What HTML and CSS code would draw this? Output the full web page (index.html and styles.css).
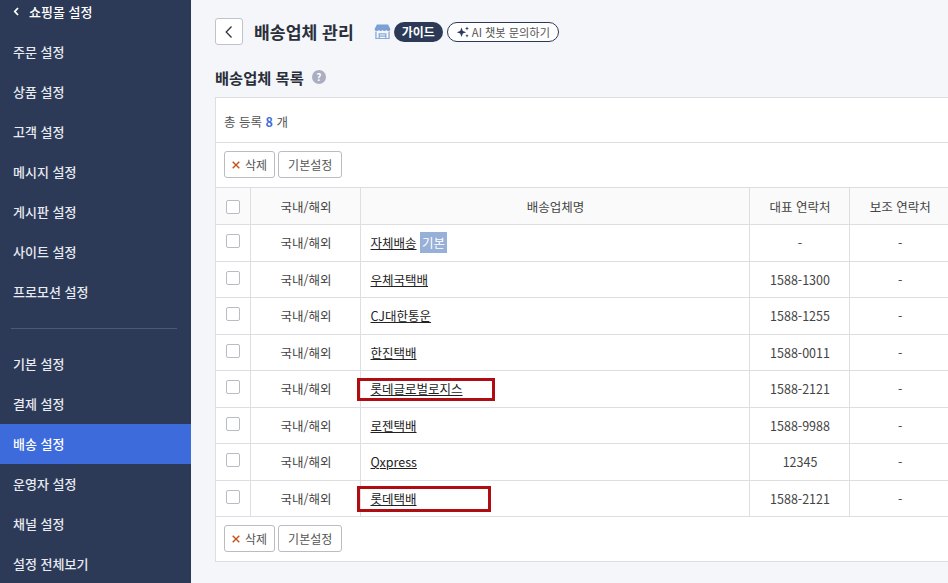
FILE: index.html
```html
<!DOCTYPE html>
<html lang="ko">
<head>
    <meta charset="UTF-8">
    <title>배송업체 관리</title>
    <link rel="stylesheet" href="styles.css">
</head>
<body>
    <!-- Sidebar -->
    <aside class="sidebar">
        <div class="side-item side-back">
            <svg class="back-icon" width="7" height="9" viewBox="0 0 7 9"><path d="M5 1 L1.8 4.5 L5 8" fill="none" stroke="#fff" stroke-width="1.8"/></svg>
            쇼핑몰 설정
        </div>
        <div class="side-item">주문 설정</div>
        <div class="side-item">상품 설정</div>
        <div class="side-item">고객 설정</div>
        <div class="side-item">메시지 설정</div>
        <div class="side-item">게시판 설정</div>
        <div class="side-item">사이트 설정</div>
        <div class="side-item">프로모션 설정</div>
        <div class="side-divider"></div>
        <div class="side-item">기본 설정</div>
        <div class="side-item">결제 설정</div>
        <div class="side-item active">배송 설정</div>
        <div class="side-item">운영자 설정</div>
        <div class="side-item">채널 설정</div>
        <div class="side-item">설정 전체보기</div>
    </aside>

    <main class="content">
        <!-- Page title -->
        <div class="page-head">
            <button class="back-btn">
                <svg width="10" height="14" viewBox="0 0 10 14"><path d="M7.5 1.5 L2.2 7 L7.5 12.5" fill="none" stroke="#333" stroke-width="1.3"/></svg>
            </button>
            <h1>배송업체 관리</h1>
            <svg class="store-icon" width="17" height="15" viewBox="0 0 18 16">
                <path d="M3 0.5 H15 L17.5 5.5 Q17 7.5 15 7.5 Q13.5 7.5 13 6.5 Q12 7.5 11 7.5 Q9.8 7.5 9 6.5 Q8.2 7.5 7 7.5 Q6 7.5 5 6.5 Q4.5 7.5 3 7.5 Q1 7.5 0.5 5.5 Z" fill="#7ba0d6"/>
                <path d="M2 8 V15.5 H16 V8 M5.5 15.5 V10.5 H12.5 V15.5 M5.5 13 H12.5" fill="none" stroke="#8aabd9" stroke-width="1.4"/>
            </svg>
            <span class="guide-pill">가이드</span>
            <span class="ai-pill">
                <svg width="14" height="12" viewBox="0 0 14 12">
                    <path d="M5.5 1.5 L6.8 5 L10.2 6.2 L6.8 7.5 L5.5 11 L4.2 7.5 L0.8 6.2 L4.2 5 Z" fill="#2b3a58"/>
                    <path d="M11 0.5 L11.6 2 L13 2.5 L11.6 3 L11 4.5 L10.4 3 L9 2.5 L10.4 2 Z" fill="#2b3a58"/>
                    <path d="M11 8 L11.5 9.2 L12.7 9.7 L11.5 10.2 L11 11.4 L10.5 10.2 L9.3 9.7 L10.5 9.2 Z" fill="#2b3a58"/>
                </svg>
                AI 챗봇 문의하기
            </span>
        </div>

        <div class="section-head">
            <h2>배송업체 목록</h2>
            <span class="help-icon">?</span>
        </div>

        <!-- Carrier list -->
        <section class="panel">
            <div class="panel-count">총 등록 <b>8</b> 개</div>
            <div class="panel-tools">
                <button class="btn btn-del">
                    <svg width="8" height="8" viewBox="0 0 8 8"><path d="M0.7 0.7 L7.3 7.3 M7.3 0.7 L0.7 7.3" stroke="#c8501c" stroke-width="1.4"/></svg>
                    삭제
                </button>
                <button class="btn">기본설정</button>
            </div>
            <table class="carrier-table">
                <colgroup>
                    <col class="col-check"><col class="col-region"><col class="col-name"><col class="col-phone"><col class="col-phone">
                </colgroup>
                <thead>
                    <tr>
                        <th><span class="check"></span></th>
                        <th>국내/해외</th>
                        <th>배송업체명</th>
                        <th>대표 연락처</th>
                        <th>보조 연락처</th>
                    </tr>
                </thead>
                <tbody>
                    <tr>
                        <td><span class="check"></span></td><td>국내/해외</td>
                        <td class="name"><a>자체배송</a> <span class="default-tag">기본</span></td>
                        <td>-</td><td>-</td>
                    </tr>
                    <tr>
                        <td><span class="check"></span></td><td>국내/해외</td>
                        <td class="name"><a>우체국택배</a></td>
                        <td>1588-1300</td><td>-</td>
                    </tr>
                    <tr>
                        <td><span class="check"></span></td><td>국내/해외</td>
                        <td class="name"><a>CJ대한통운</a></td>
                        <td>1588-1255</td><td>-</td>
                    </tr>
                    <tr>
                        <td><span class="check"></span></td><td>국내/해외</td>
                        <td class="name"><a>한진택배</a></td>
                        <td>1588-0011</td><td>-</td>
                    </tr>
                    <tr>
                        <td><span class="check"></span></td><td>국내/해외</td>
                        <td class="name"><a>롯데글로벌로지스</a><span class="mark mark-a"></span></td>
                        <td>1588-2121</td><td>-</td>
                    </tr>
                    <tr>
                        <td><span class="check"></span></td><td>국내/해외</td>
                        <td class="name"><a>로젠택배</a></td>
                        <td>1588-9988</td><td>-</td>
                    </tr>
                    <tr>
                        <td><span class="check"></span></td><td>국내/해외</td>
                        <td class="name"><a>Qxpress</a></td>
                        <td>12345</td><td>-</td>
                    </tr>
                    <tr>
                        <td><span class="check"></span></td><td>국내/해외</td>
                        <td class="name"><a>롯데택배</a><span class="mark mark-b"></span></td>
                        <td>1588-2121</td><td>-</td>
                    </tr>
                </tbody>
            </table>
            <div class="panel-tools panel-tools-bottom">
                <button class="btn btn-del">
                    <svg width="8" height="8" viewBox="0 0 8 8"><path d="M0.7 0.7 L7.3 7.3 M7.3 0.7 L0.7 7.3" stroke="#c8501c" stroke-width="1.4"/></svg>
                    삭제
                </button>
                <button class="btn">기본설정</button>
            </div>
        </section>
    </main>
</body>
</html>
```

FILE: styles.css
```css
/* General Reset */
* {
    margin: 0;
    padding: 0;
    box-sizing: border-box;
}

html, body {
    height: 583px;
    overflow: hidden;
}

body {
    display: flex;
    font-family: "Noto Sans CJK KR", "Noto Sans", sans-serif;
    background-color: #f4f6fa;
    color: #333;
}

/* Sidebar */
.sidebar {
    flex: 0 0 191px;
    height: 591px;
    margin-top: -8px;
    overflow: hidden;
    background-color: #2c3a58;
}

.side-item {
    display: flex;
    align-items: center;
    height: 40px;
    padding: 0 0 2px 13px;
    font-size: 13px;
    font-weight: 500;
    color: #e8ebf1;
}

.side-back {
    color: #fff;
}

.back-icon {
    margin-right: 9px;
}

.side-item.active {
    background-color: #3d6bdc;
    color: #fff;
}

.side-divider {
    height: 1px;
    margin: 16px 14px 15px 11px;
    background-color: #4d5a75;
}

/* Page title */
.content {
    flex: 1;
    min-width: 0;
    padding: 18px 0 0 24px;
}

.page-head {
    display: flex;
    align-items: center;
    height: 27px;
}

.back-btn {
    display: flex;
    align-items: center;
    justify-content: center;
    width: 28px;
    height: 27px;
    background-color: #fff;
    border: 1px solid #bfc3ca;
    border-radius: 3px;
}

.page-head h1 {
    margin: 0 20px 0 11px;
    font-size: 17.2px;
    font-weight: 700;
    color: #2a2f3a;
}

.store-icon {
    margin-right: 3px;
}

.guide-pill {
    height: 20px;
    padding: 0 8px;
    margin-right: 4px;
    border-radius: 10px;
    background-color: #2c3a58;
    color: #fff;
    font-size: 12px;
    font-weight: 700;
    line-height: 19px;
}

.ai-pill {
    display: flex;
    align-items: center;
    gap: 2px;
    height: 20px;
    padding: 0 8px;
    border: 1px solid #2c3a58;
    border-radius: 10px;
    background-color: #fff;
    color: #555;
    font-size: 11.2px;
}

.section-head {
    display: flex;
    align-items: center;
    gap: 8px;
    margin-top: 20px;
    height: 24px;
}

.section-head h2 {
    font-size: 15.3px;
    font-weight: 700;
    color: #2a2f3a;
}

.help-icon {
    width: 14px;
    height: 14px;
    border-radius: 50%;
    background-color: #a9afc0;
    color: #fff;
    font-size: 10px;
    font-weight: 700;
    line-height: 14px;
    text-align: center;
}

/* Panel */
.panel {
    margin-top: 8px;
    background-color: #fff;
    border: 1px solid #dcdee2;
    border-right: none;
}

.panel-count {
    height: 45px;
    padding-left: 8px;
    border-bottom: 1px solid #dcdee2;
    font-size: 12.5px;
    line-height: 47px;
    color: #555;
}

.panel-count b {
    font-weight: 700;
    color: #3d6bdc;
}

.panel-tools {
    display: flex;
    gap: 3px;
    height: 44px;
    padding: 8px 0 0 8px;
}

.btn {
    display: flex;
    align-items: center;
    justify-content: center;
    height: 27px;
    padding: 0 9px;
    background-color: #fff;
    border: 1px solid #b9bcc3;
    border-radius: 3px;
    font-family: inherit;
    font-size: 12px;
    color: #555;
}

.btn-del {
    gap: 5px;
    padding: 0 7px;
}

/* Table */
.carrier-table {
    width: 733px;
    table-layout: fixed;
    border-collapse: collapse;
    font-size: 12.5px;
}

.col-check { width: 34px; }
.col-region { width: 110px; }
.col-name { width: 389px; }
.col-phone { width: 100px; }

.carrier-table th,
.carrier-table td {
    height: 36.5px;
    padding-left: 2px;
    border: 1px solid #dcdee2;
    text-align: center;
    font-weight: 400;
    color: #444;
}

.carrier-table tr > :first-child {
    padding-left: 0;
    border-left: none;
}

.carrier-table tr > :last-child {
    border-right: none;
}

.carrier-table th {
    background-color: #fafafa;
    height: 37px;
}

.carrier-table td.name {
    position: relative;
    padding-left: 10px;
    text-align: left;
}

.name a {
    color: #222;
    text-decoration: underline;
}

.default-tag {
    padding: 1px 2px;
    background-color: #97b0d8;
    color: #fff;
}

.check {
    display: block;
    width: 14px;
    height: 14px;
    margin: -3px 0 0 10px;
    background-color: #fff;
    border: 1px solid #b9bcc3;
    border-radius: 2px;
}

th .check {
    margin-top: 1px;
}

/* Red highlight boxes over the name cell */
.mark {
    position: absolute;
    left: -4px;
    border: 3px solid #b00d12;
}

.mark-a {
    top: 7px;
    width: 138px;
    height: 23px;
}

.mark-b {
    top: 5px;
    width: 134px;
    height: 26px;
}
```
